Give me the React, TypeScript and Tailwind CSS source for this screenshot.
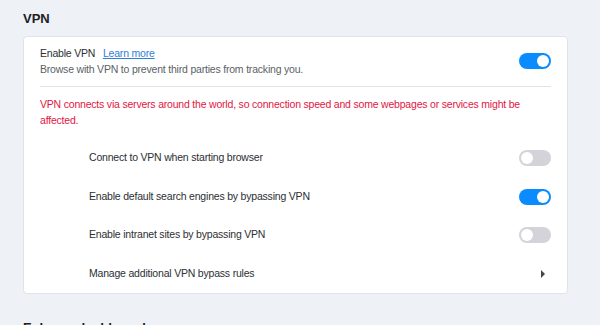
import {FunctionComponent} from "react";

const Toggle: FunctionComponent<{ on: boolean }> = ({on}) => (
    <div
        className={`flex items-center w-[32px] h-[16px] rounded-full px-[2px] ${
            on ? 'bg-[#0a8cff] justify-end' : 'bg-[#d3d3d9] justify-start'
        }`}
    >
        <div className="w-[12px] h-[12px] rounded-full bg-white"/>
    </div>
)

const SubRow: FunctionComponent<{ label: string, children: React.ReactNode }> = ({label, children}) => (
    <div className="flex items-center justify-between h-[38.5px] pl-[65px] pr-[16px]">
        <span>{label}</span>
        {children}
    </div>
)

const App: FunctionComponent = () => {
    return (
        <div className="w-[600px] h-[325px] overflow-hidden bg-[#eef2f6] font-['Liberation_Sans',sans-serif] text-[10.5px] tracking-[-0.2px] text-[#2c2f33]">
            <div className="px-[23px] pt-[9px]">
                <h2 className="text-[13px] font-bold tracking-normal leading-[20px] text-[#1d2024]">VPN</h2>
                <div className="mt-[7px] w-[545px] bg-white border border-[#dfe4ea] rounded-[4px]">
                    <div className="mx-[16px] flex items-center justify-between pt-[8px] pb-[9px] border-b border-[#dfe4ea]">
                        <div>
                            <div className="leading-[16px]">
                                Enable VPN <a className="ml-[5px] text-[#2f7ed8] underline" href="#">Learn more</a>
                            </div>
                            <div className="leading-[16px] text-[#5a5f66]">
                                Browse with VPN to prevent third parties from tracking you.
                            </div>
                        </div>
                        <Toggle on={true}/>
                    </div>
                    <p className="mx-[16px] mt-[9px] leading-[16px] text-[#e3163f]">
                        VPN connects via servers around the world, so connection speed and some webpages or services
                        might be<br/>affected.
                    </p>
                    <div className="mt-[11px]">
                        <SubRow label="Connect to VPN when starting browser"><Toggle on={false}/></SubRow>
                        <SubRow label="Enable default search engines by bypassing VPN"><Toggle on={true}/></SubRow>
                        <SubRow label="Enable intranet sites by bypassing VPN"><Toggle on={false}/></SubRow>
                        <SubRow label="Manage additional VPN bypass rules">
                            <span className="w-[32px] flex justify-end pr-[6px]">
                                <span className="w-0 h-0 border-y-[4px] border-y-transparent border-l-[4px] border-l-[#444]"/>
                            </span>
                        </SubRow>
                    </div>
                </div>
                <h2 className="mt-[24px] text-[13px] font-bold tracking-normal leading-[20px] text-[#1d2024]">Enhanced address bar</h2>
            </div>
        </div>
    )
}

export default App;
